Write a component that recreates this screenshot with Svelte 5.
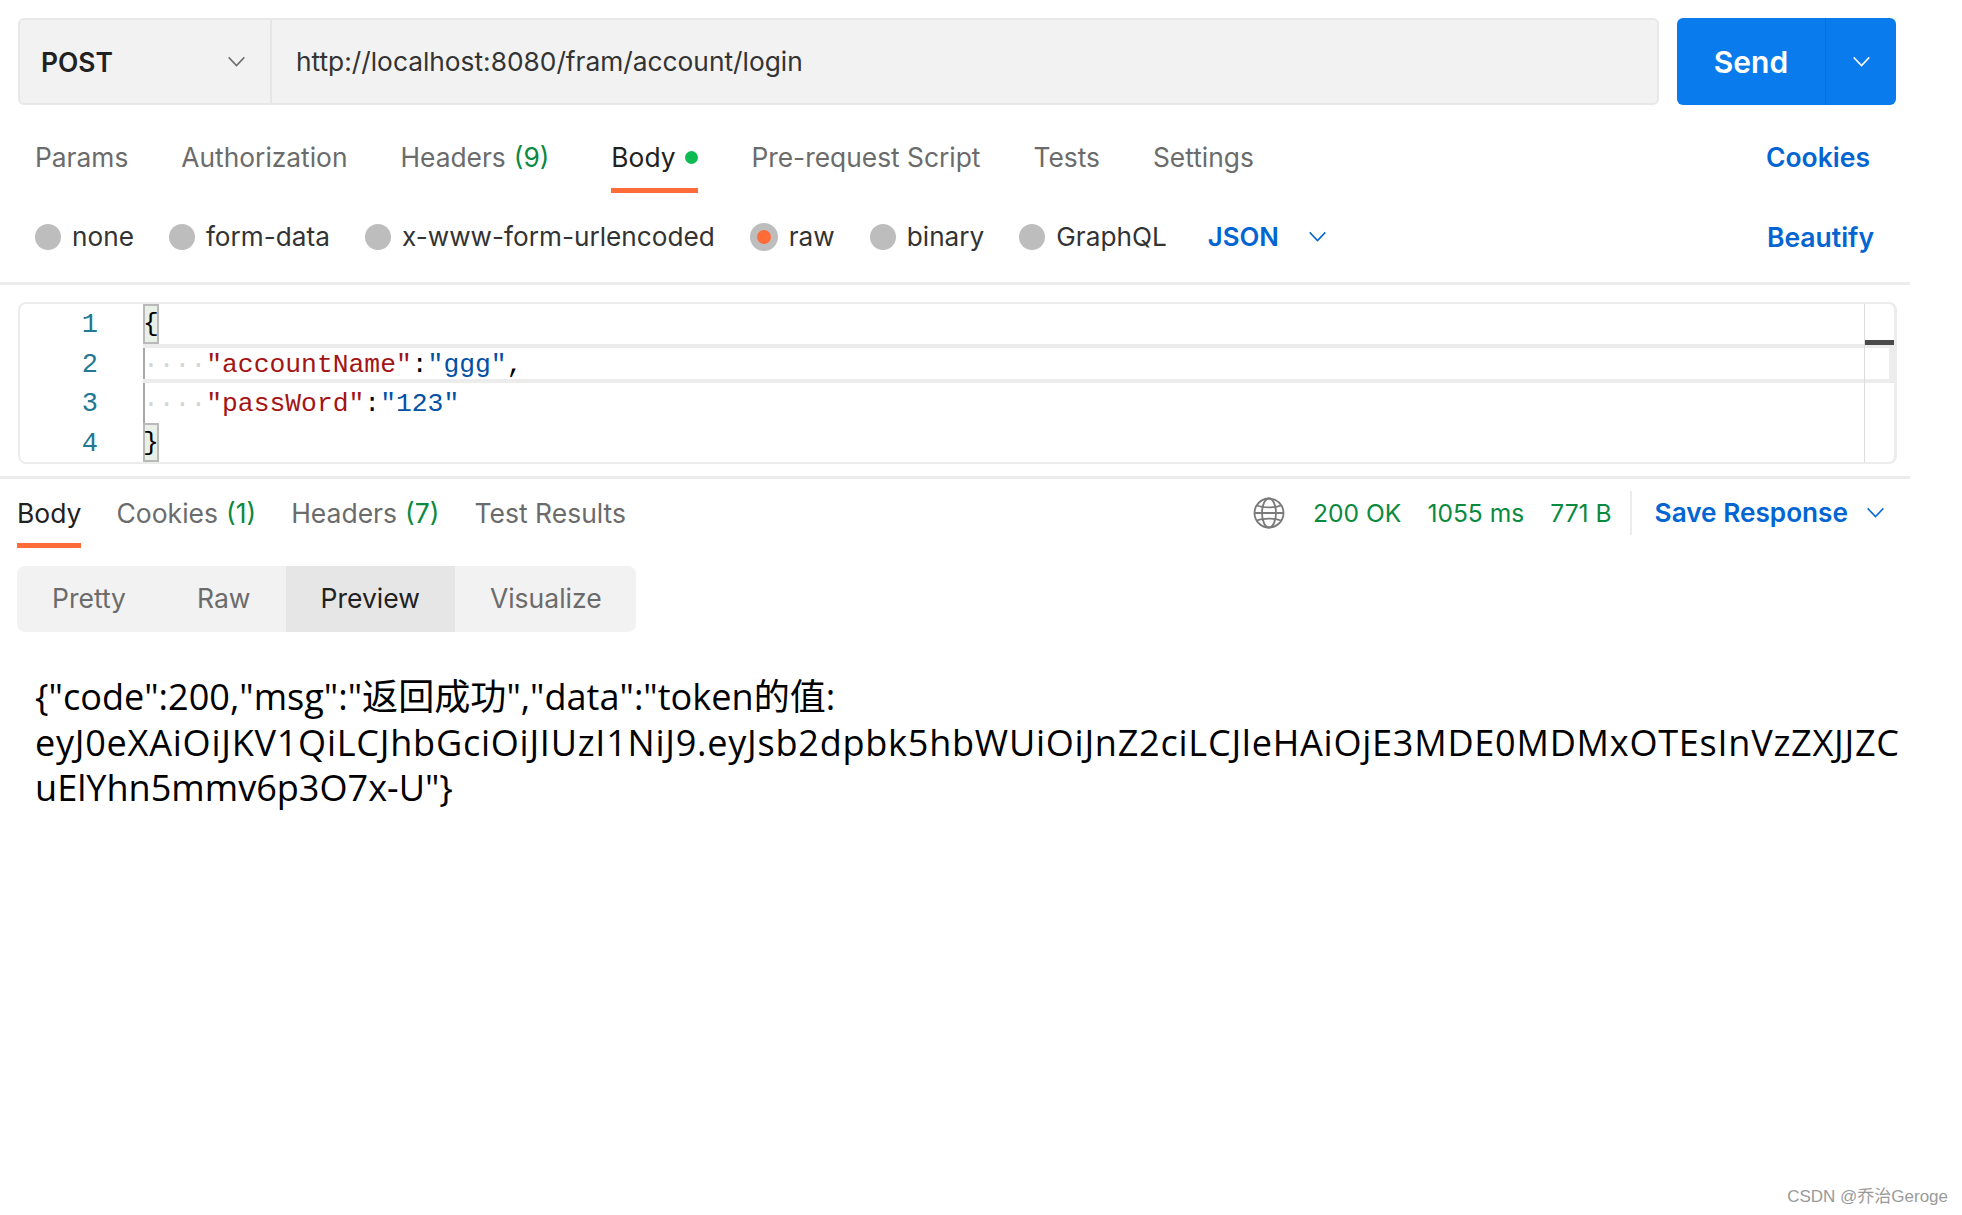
<script>
	const requestTabs = [
		{ label: 'Params' },
		{ label: 'Authorization' },
		{ label: 'Headers', count: '(9)' },
		{ label: 'Body', active: true, dot: true },
		{ label: 'Pre-request Script' },
		{ label: 'Tests' },
		{ label: 'Settings' }
	];

	const bodyTypes = ['none', 'form-data', 'x-www-form-urlencoded', 'raw', 'binary', 'GraphQL'];

	const responseTabs = [
		{ label: 'Body', active: true },
		{ label: 'Cookies', count: '(1)' },
		{ label: 'Headers', count: '(7)' },
		{ label: 'Test Results' }
	];

	const views = ['Pretty', 'Raw', 'Preview', 'Visualize'];
</script>

{#snippet chevron(cls)}
	<svg class="chevron {cls}" viewBox="0 0 20 12" fill="none" stroke="currentColor" stroke-width="1.6">
		<path d="M1.5 1.5 L10 10.5 L18.5 1.5" />
	</svg>
{/snippet}

<div class="page">
	<div class="url-row">
		<div class="url-bar">
			<div class="method">
				<span>POST</span>
				{@render chevron('grey')}
			</div>
			<div class="url">http://localhost:8080/fram/account/login</div>
		</div>
		<div class="send">
			<span class="send-label">Send</span>
			<span class="send-more">{@render chevron('white')}</span>
		</div>
	</div>

	<div class="tabs request-tabs">
		{#each requestTabs as tab}
			<div class="tab" class:active={tab.active}>
				{tab.label}
				{#if tab.count}<span class="count">{tab.count}</span>{/if}
				{#if tab.dot}<span class="dot"></span>{/if}
			</div>
		{/each}
		<div class="link cookies">Cookies</div>
	</div>

	<div class="body-types">
		{#each bodyTypes as type}
			<label class="radio" class:on={type === 'raw'}>
				<span class="circle"></span>
				{type}
			</label>
		{/each}
		<span class="link json">JSON</span>
		{@render chevron('blue')}
		<span class="link beautify">Beautify</span>
	</div>

	<div class="editor">
		<div class="gutter">
			{#each [1, 2, 3, 4] as n}
				<div class="ln">{n}</div>
			{/each}
		</div>
		<div class="code">
			<div class="line"><span class="bracket">&#123;</span></div>
			<div class="line current guide"><span class="ws">····</span><span class="key">"accountName"</span>:<span class="val">"ggg"</span>,</div>
			<div class="line guide"><span class="ws">····</span><span class="key">"passWord"</span>:<span class="val">"123"</span></div>
			<div class="line"><span class="bracket">&#125;</span></div>
		</div>
		<div class="overview"><span class="thumb"></span></div>
	</div>

	<div class="tabs response-tabs">
		{#each responseTabs as tab}
			<div class="tab" class:active={tab.active}>
				{tab.label}
				{#if tab.count}<span class="count">{tab.count}</span>{/if}
			</div>
		{/each}
		<div class="status">
			<svg class="globe" viewBox="0 0 32 32" fill="none" stroke="#7a7a7a" stroke-width="1.8">
				<circle cx="16" cy="16" r="14.5" />
				<ellipse cx="16" cy="16" rx="7" ry="14.5" />
				<path d="M4 8.5 C10 11 22 11 28 8.5 M4 23.5 C10 21 22 21 28 23.5 M1.5 16 H30.5" />
			</svg>
			<span class="ok s200">200 OK</span>
			<span class="ok s1055">1055 ms</span>
			<span class="ok s771">771 B</span>
			<span class="sep"></span>
			<span class="link save">Save Response</span>
			{@render chevron('blue small')}
		</div>
	</div>

	<div class="views">
		{#each views as v}
			<div class="view" class:active={v === 'Preview'}>{v}</div>
		{/each}
	</div>

	<div class="preview">
		<div>&#123;"code":200,"msg":"返回成功","data":"token的值:</div>
		<div class="token">eyJ0eXAiOiJKV1QiLCJhbGciOiJIUzI1NiJ9.eyJsb2dpbk5hbWUiOiJnZ2ciLCJleHAiOjE3MDE0MDMxOTEsInVzZXJJZC</div>
		<div>uElYhn5mmv6p3O7x-U"&#125;</div>
	</div>

	<div class="watermark">CSDN @乔治Geroge</div>
</div>

<style>
	:global(body) {
		margin: 0;
		background: #fff;
	}

	.page {
		position: relative;
		height: 1215px;
		overflow: hidden;
		font-family: Inter, "Noto Sans", sans-serif;
		font-size: 26.5px;
		color: #212121;
	}

	.url-row {
		display: flex;
		gap: 18px;
		padding: 18px 0 0 18px;
	}

	.url-bar {
		display: flex;
		width: 1641px;
		height: 87px;
		box-sizing: border-box;
		background: #f2f2f2;
		border: 2px solid #e8e8e8;
		border-radius: 6px;
	}

	.method {
		display: flex;
		align-items: center;
		justify-content: space-between;
		width: 252px;
		box-sizing: border-box;
		padding: 0 24px 0 21px;
		border-right: 2px solid #e6e6e6;
		font-size: 26.4px;
		font-weight: 600;
	}

	.url {
		display: flex;
		align-items: center;
		padding-left: 24px;
		font-size: 26.3px;
		color: #333;
	}

	.send {
		display: flex;
		width: 219px;
		height: 87px;
		background: #097bed;
		border-radius: 6px;
		color: #fff;
		font-size: 30px;
		font-weight: 600;
	}

	.send-label {
		display: flex;
		align-items: center;
		justify-content: center;
		width: 148px;
		border-right: 1px solid #0a6fd4;
	}

	.send-more {
		display: flex;
		flex: 1;
		align-items: center;
		justify-content: center;
	}

	.chevron {
		display: block;
		width: 19px;
		height: 11px;
		flex: none;
	}

	.grey {
		color: #6b6b6b;
	}

	.white {
		color: #fff;
	}

	.blue {
		color: #0265d2;
	}

	.tabs {
		display: flex;
		height: 70px;
	}

	.request-tabs {
		gap: 53px;
		margin-top: 18px;
		padding: 0 26px 0 35px;
		width: 1896px;
		box-sizing: border-box;
		font-size: 26.35px;
	}

	.request-tabs .tab {
		padding-bottom: 2px;
	}

	.request-tabs .tab.active {
		margin-left: 9px;
	}

	.tab {
		display: flex;
		align-items: center;
		gap: 8px;
		box-sizing: border-box;
		padding-bottom: 1px;
		border-top: 5px solid transparent;
		border-bottom: 5px solid transparent;
		color: #6b6b6b;
		white-space: nowrap;
	}

	.tab.active {
		color: #212121;
		border-bottom-color: #ff6c37;
	}

	.count {
		color: #0a8a3f;
	}

	.dot {
		width: 13px;
		height: 13px;
		margin-left: 2px;
		border-radius: 50%;
		background: #0cbb52;
	}

	.link {
		color: #0265d2;
		font-size: 26.5px;
		font-weight: 600;
		white-space: nowrap;
	}

	.cookies {
		display: flex;
		align-items: center;
		margin-left: auto;
		padding-bottom: 2px;
	}

	.body-types {
		display: flex;
		align-items: center;
		gap: 35px;
		height: 92px;
		width: 1910px;
		padding: 0 0 2px 35px;
		box-sizing: border-box;
		border-bottom: 3px solid #ececec;
		font-size: 26.2px;
	}

	.radio {
		display: flex;
		align-items: center;
		gap: 11px;
		white-space: nowrap;
		color: #333;
	}

	.circle {
		width: 26px;
		height: 26px;
		box-sizing: border-box;
		border-radius: 50%;
		background: #bdbdbd;
	}

	.radio.on .circle {
		width: 28px;
		height: 28px;
		background: #ff6c37;
		border: 7px solid #bdbdbd;
	}

	.json {
		margin-left: 6px;
		margin-right: -6px;
		font-size: 25.8px;
	}

	.beautify {
		margin-left: auto;
		padding-right: 36px;
	}

	.editor {
		position: relative;
		display: flex;
		width: 1879px;
		height: 162px;
		margin: 17px 0 0 18px;
		box-sizing: border-box;
		border: 2px solid #ececec;
		border-right-width: 3px;
		border-radius: 8px;
		font-family: "Liberation Mono", monospace;
		font-size: 26.35px;
	}

	.gutter {
		width: 123px;
		flex: none;
		color: #237893;
		font-size: 27px;
	}

	.ln {
		width: 78px;
		height: 39.5px;
		line-height: 43.5px;
		text-align: right;
	}

	.code {
		flex: 1;
		min-width: 0;
		color: #000;
	}

	.line {
		height: 39.5px;
		line-height: 43.5px;
		box-sizing: border-box;
		white-space: pre;
	}

	.guide {
		box-shadow: inset 2px 0 0 #a8a8a8;
	}

	.current {
		line-height: 35.5px;
		border: solid #ececec;
		border-width: 4px 5px 4px 0;
	}

	.bracket {
		display: inline-block;
		width: 15.7px;
		height: 39.5px;
		box-sizing: border-box;
		vertical-align: top;
		background: #e8f0e8;
		border: 2px solid #b9b9b9;
		line-height: 37.5px;
		text-indent: -2px;
	}

	.ws {
		color: #d4d4d4;
	}

	.key {
		color: #a31515;
	}

	.val {
		color: #0451a5;
	}

	.overview {
		position: absolute;
		top: 0;
		right: 0;
		bottom: 0;
		width: 29px;
		border-left: 1px solid #ddd;
	}

	.thumb {
		position: absolute;
		top: 36px;
		left: 0;
		right: 0;
		height: 5px;
		background: #4a4a4a;
	}

	.response-tabs {
		height: 72px;
		gap: 35px;
		margin-top: 12px;
		width: 1910px;
		box-sizing: border-box;
		padding-left: 17px;
		border-top: 3px solid #ececec;
	}

	.status {
		display: flex;
		align-items: center;
		margin-left: auto;
		height: 67px;
		padding-right: 25px;
	}

	.globe {
		width: 32px;
		height: 32px;
		margin-right: 28px;
	}

	.ok {
		color: #0a8a3f;
		font-size: 24.6px;
		white-space: nowrap;
	}

	.s200,
	.s1055 {
		margin-right: 26px;
	}

	.sep {
		width: 2px;
		height: 44px;
		margin: 0 23px 0 18px;
		background: #ececec;
	}

	.save {
		margin-right: 18px;
		font-size: 26.2px;
	}

	.views {
		display: flex;
		width: 619px;
		height: 66px;
		margin: 18px 0 0 17px;
		background: #f2f2f2;
		border-radius: 8px;
		overflow: hidden;
	}

	.view {
		display: flex;
		align-items: center;
		padding: 0 35px 2px;
		color: #6b6b6b;
	}

	.view:first-child {
		padding-right: 36px;
	}

	.view.active {
		background: #e6e6e6;
		color: #212121;
	}

	.preview {
		margin: 42px 0 0 35px;
		font-family: "Open Sans", "Noto Sans CJK SC", sans-serif;
		font-size: 36.1px;
		line-height: 45.5px;
		color: #000;
		white-space: nowrap;
	}

	.token {
		letter-spacing: 0.74px;
	}

	.watermark {
		position: absolute;
		right: 14px;
		bottom: 8px;
		font-family: "Liberation Sans", "Noto Sans CJK SC", sans-serif;
		font-size: 17px;
		color: #9a9a9a;
	}
</style>
